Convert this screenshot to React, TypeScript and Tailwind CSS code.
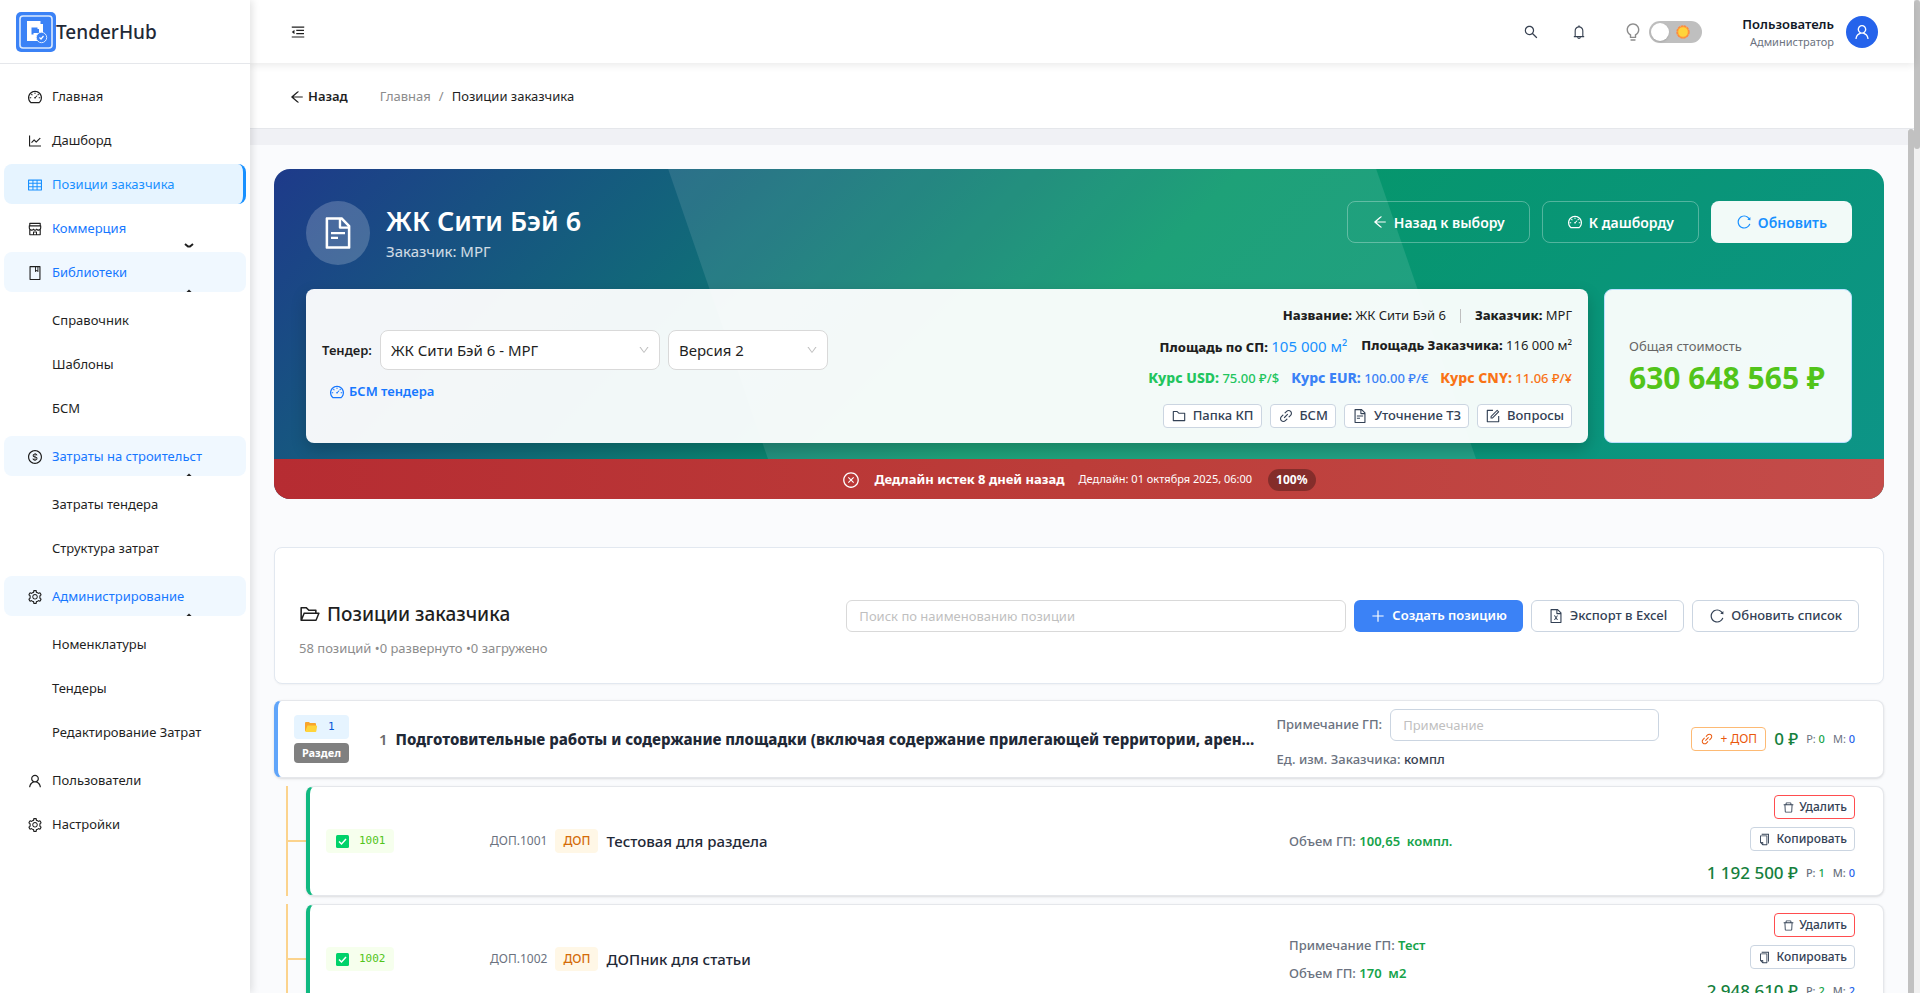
import React from "react";
import {
  AiOutlineArrowLeft, AiOutlineBell, AiOutlineBook, AiOutlineBulb, AiOutlineCloseCircle, AiOutlineCopy,
  AiOutlineDashboard, AiOutlineDelete, AiOutlineDollar, AiOutlineDown, AiOutlineFileExcel, AiOutlineFileText,
  AiOutlineFolder, AiOutlineFolderOpen, AiOutlineForm, AiOutlineLineChart, AiOutlineLink, AiOutlineMenuFold,
  AiOutlinePlus, AiOutlineReload, AiOutlineSearch, AiOutlineSetting, AiOutlineShop, AiOutlineTable, AiOutlineUser,
} from "react-icons/ai";
import type { IconType } from "react-icons";

type MenuEntry = {
  label: string;
  icon: IconType;
  state?: "active" | "open" | "closed";
  children?: string[];
};

const MENU: MenuEntry[] = [
  { label: "Главная", icon: AiOutlineDashboard },
  { label: "Дашборд", icon: AiOutlineLineChart },
  { label: "Позиции заказчика", icon: AiOutlineTable, state: "active" },
  { label: "Коммерция", icon: AiOutlineShop, state: "closed" },
  { label: "Библиотеки", icon: AiOutlineBook, state: "open", children: ["Справочник", "Шаблоны", "БСМ"] },
  { label: "Затраты на строительст", icon: AiOutlineDollar, state: "open", children: ["Затраты тендера", "Структура затрат"] },
  { label: "Администрирование", icon: AiOutlineSetting, state: "open", children: ["Номенклатуры", "Тендеры", "Редактирование Затрат"] },
  { label: "Пользователи", icon: AiOutlineUser },
  { label: "Настройки", icon: AiOutlineSetting },
];

function Logo() {
  return (
    <svg viewBox="0 0 40 40" className="size-10" aria-hidden="true">
      <rect width="40" height="40" rx="5" fill="#3b82f6" />
      <rect x="4" y="4" width="32" height="32" rx="3" fill="none" stroke="#dbeafe" strokeWidth="1.6" />
      <path d="M11 9h13.500v3H27v17H11z" fill="#fff" />
      <path d="M15.500 15.500h6v1.500h1.500v4h-5.500v1.500h-2z" fill="#3b82f6" />
      <circle cx="25.500" cy="25.500" r="5.200" fill="#3b82f6" stroke="#dbeafe" />
      <path d="m23.500 25.500 1.500 1.500 2.500-3" fill="none" stroke="#fff" strokeWidth="1.200" />
    </svg>
  );
}

function SunMark() {
  return (
    <svg viewBox="0 0 14 14" className="size-3.5" aria-hidden="true">
      <circle cx="7" cy="7" r="5.900" fill="#ffd43b" stroke="#ff8a3c" strokeWidth="1.600" strokeDasharray="2.600 0.490" />
      <circle cx="7" cy="7" r="5.200" fill="#ffd43b" stroke="#ff8a3c" strokeWidth="0.600" />
    </svg>
  );
}

function SidebarItem({ entry }: { entry: MenuEntry }) {
  const Icon = entry.icon;
  const base = "relative flex h-10 items-center gap-[9px] overflow-hidden rounded-lg pt-px pl-[23px] text-[13px] whitespace-nowrap";
  const look =
    entry.state === "active"
      ? "border-r-[3px] border-[#1890ff] bg-[#e6f4ff] text-[#1890ff]"
      : entry.state === "open"
        ? "bg-[#f0f8ff] text-[#1677ff]"
        : entry.state === "closed"
          ? "text-[#1677ff]"
          : "text-[#1f1f1f]";
  return (
    <li>
      <a href="#" className={`${base} ${look}`}>
        <Icon className={entry.state === "active" ? "size-4" : "size-4 text-[#1f1f1f]"} />
        {entry.label}
        {entry.state === "closed" && (
          <svg viewBox="0 0 10 5" className="absolute right-13 bottom-0 h-[5px] w-2.5" aria-hidden="true">
            <path d="M1 1l3 2.500h2L9 1" fill="none" stroke="#1f1f1f" strokeWidth="2" />
          </svg>
        )}
        {entry.state === "open" && (
          <svg viewBox="0 0 10 5" className="absolute right-13 bottom-0 h-[5px] w-2.5" aria-hidden="true">
            <path d="M2.500 5l2.500-2.500L7.500 5z" fill="#1f1f1f" />
          </svg>
        )}
      </a>
      {entry.children && (
        <ul className="mt-2 flex flex-col gap-1 pb-1">
          {entry.children.map((c) => (
            <li key={c}>
              <a href="#" className="flex h-10 items-center rounded-lg pt-px pl-12 text-[13px] text-[#1f1f1f]">{c}</a>
            </li>
          ))}
        </ul>
      )}
    </li>
  );
}

function Sidebar() {
  return (
    <aside className="z-10 flex w-[250px] shrink-0 flex-col bg-white shadow-[2px_0_8px_rgba(0,0,0,0.12)]">
      <div className="flex h-16 items-center border-b border-[#e5e7eb] px-4">
        <Logo />
        <span className="pt-0.5 text-[19px] font-medium text-[#1f2937]">TenderHub</span>
      </div>
      <nav className="px-1 pt-3">
        <ul className="flex flex-col gap-1">
          {MENU.map((m) => <SidebarItem key={m.label} entry={m} />)}
        </ul>
      </nav>
    </aside>
  );
}

function Header() {
  return (
    <header className="z-[5] flex h-[63px] shrink-0 items-center justify-between bg-white pt-px pr-9 pl-10 shadow-[0_2px_8px_rgba(0,0,0,0.09)]">
      <button aria-label="Свернуть меню" className="text-[#1f1f1f]"><AiOutlineMenuFold className="size-4" /></button>
      <div className="flex items-center">
        <button aria-label="Поиск" className="grid size-8 place-items-center text-[#374151]"><AiOutlineSearch className="size-4" /></button>
        <button aria-label="Уведомления" className="ml-4 grid size-8 place-items-center text-[#374151]"><AiOutlineBell className="size-4" /></button>
        <AiOutlineBulb className="ml-7 size-5 text-[#8c8c8c]" />
        <button role="switch" aria-checked="false" aria-label="Тёмная тема" className="ml-1.5 flex h-[22px] w-[53px] items-center justify-between rounded-full bg-[#bfbfbf] pr-3 pl-0.5">
          <span className="size-[18px] rounded-full bg-white shadow" />
          <SunMark />
        </button>
        <div className="ml-10 flex flex-col items-end">
          <span className="text-[13px] leading-5 font-semibold text-[#111827]">Пользователь</span>
          <span className="text-[11px] leading-4 text-[#6b7280]">Администратор</span>
        </div>
        <span className="ml-3 grid size-8 place-items-center rounded-full bg-[#2563eb] text-white"><AiOutlineUser className="size-[18px]" /></span>
      </div>
    </header>
  );
}

function Breadcrumbs() {
  return (
    <div className="flex h-[66px] shrink-0 items-center border-b border-[#e5e7eb] bg-white pt-0.5 pl-[39px]">
      <button className="flex items-center gap-[3px] text-[13px] font-semibold text-[#1f1f1f]"><AiOutlineArrowLeft className="size-4" />Назад</button>
      <nav aria-label="Навигация" className="ml-8 flex gap-2 text-[13px] text-[#8c8c8c]">
        <a href="#">Главная</a>
        <span>/</span>
        <span className="text-[#1f1f1f]">Позиции заказчика</span>
      </nav>
    </div>
  );
}

function PickList({ id, value, width }: { id: string; value: string; width: string }) {
  return (
    <div className={`relative ${width}`}>
      <select id={id} aria-label={value} className="h-10 w-full appearance-none rounded-lg border border-[#d9d9d9] bg-white px-2.5 text-[15px] text-[#1f1f1f]">
        <option>{value}</option>
      </select>
      <AiOutlineDown className="pointer-events-none absolute top-3.5 right-2.5 size-3 text-[#bfbfbf]" />
    </div>
  );
}

const LINKS: { icon: IconType; label: string }[] = [
  { icon: AiOutlineFolder, label: "Папка КП" },
  { icon: AiOutlineLink, label: "БСМ" },
  { icon: AiOutlineFileText, label: "Уточнение ТЗ" },
  { icon: AiOutlineForm, label: "Вопросы" },
];

function Hero() {
  return (
    <section className="relative overflow-hidden rounded-2xl bg-[linear-gradient(135deg,#1e3a8a_0%,#059669_50%,#0d9488_100%)]">
      <div className="absolute inset-y-0 left-[28%] w-[44%] skew-x-[19deg] bg-white/10" />
      <div className="relative flex flex-col gap-6 px-8 pt-8 pb-4">
        <div className="flex items-start justify-between">
          <div className="flex items-center gap-4">
            <span className="grid size-16 place-items-center rounded-full bg-white/20 text-white"><AiOutlineFileText className="size-9" /></span>
            <div className="text-white">
              <h1 className="text-[27px] leading-9 font-semibold">ЖК Сити Бэй 6</h1>
              <p className="text-[15px] leading-6 text-white/80">Заказчик: МРГ</p>
            </div>
          </div>
          <div className="flex gap-3 text-[14px] font-semibold text-white">
            <button className="flex h-[42px] items-center gap-1.5 rounded-lg border border-white/30 px-6"><AiOutlineArrowLeft className="size-4" />Назад к выбору</button>
            <button className="flex h-[42px] items-center gap-1.5 rounded-lg border border-white/30 px-6"><AiOutlineDashboard className="size-4" />К дашборду</button>
            <button className="flex h-[42px] items-center gap-1.5 rounded-lg border border-transparent bg-white/95 px-6 text-[#1890ff]"><AiOutlineReload className="size-4" />Обновить</button>
          </div>
        </div>
        <div className="flex gap-4">
          <div className="flex h-[154px] flex-1 items-center justify-between rounded-lg bg-white/95 px-4 shadow-[0_6px_16px_rgba(0,0,0,0.2)]">
            <div className="flex flex-col gap-3">
              <div className="flex items-center gap-2">
                <label htmlFor="tender" className="text-[13px] font-semibold text-[#1f1f1f]">Тендер:</label>
                <PickList id="tender" value="ЖК Сити Бэй 6 - МРГ" width="w-[280px]" />
                <PickList id="version" value="Версия 2" width="w-40" />
              </div>
              <button className="flex items-center gap-1 pl-[7px] text-[13px] font-semibold text-[#1677ff]"><AiOutlineDashboard className="size-4" />БСМ тендера</button>
            </div>
            <div className="flex flex-col items-end text-[13px] text-[#1f1f1f]">
              <p className="flex h-6 items-center gap-3.5"><span><b className="font-extrabold">Название:</b> ЖК Сити Бэй 6</span><span className="h-3.5 w-px bg-[#bfbfbf]" /><span><b className="font-extrabold">Заказчик:</b> МРГ</span></p>
              <p className="mt-1.5 flex h-6 items-center gap-3.5"><span><b className="font-extrabold">Площадь по СП:</b> <span className="text-[15px] text-[#1890ff]">105 000 м²</span></span><span><b className="font-extrabold">Площадь Заказчика:</b> 116 000 м²</span></p>
              <p className="mt-2 flex h-6 items-center gap-3 font-medium">
                <span className="text-[#22c55e]"><b className="text-[14px] font-extrabold">Курс USD:</b> 75.00 ₽/$</span>
                <span className="text-[#3b82f6]"><b className="text-[14px] font-extrabold">Курс EUR:</b> 100.00 ₽/€</span>
                <span className="text-[#f97316]"><b className="text-[14px] font-extrabold">Курс CNY:</b> 11.06 ₽/¥</span>
              </p>
              <div className="mt-3.5 flex gap-2">
                {LINKS.map(({ icon: Icon, label }) => (
                  <button key={label} className="flex h-6 items-center gap-1.5 rounded border border-[#cbd5e1] bg-white px-[7px] font-medium text-[#334155]"><Icon className="size-4" />{label}</button>
                ))}
              </div>
            </div>
          </div>
          <div className="flex w-[248px] flex-col justify-center rounded-lg border border-[#bae0ff] bg-white/95 px-6">
            <span className="text-[13px] leading-6 text-[#666]">Общая стоимость</span>
            <span className="text-[30px] leading-10 font-bold whitespace-nowrap text-[#52c41a]">630 648 565 ₽</span>
          </div>
        </div>
      </div>
      <div className="relative flex h-10 items-center justify-center bg-[linear-gradient(90deg,#b62c32,#bc3d39_50%,#c44c4a)] pt-px text-white">
        <AiOutlineCloseCircle className="size-[18px]" />
        <span className="ml-3.5 text-[13px] font-bold">Дедлайн истек 8 дней назад</span>
        <span className="ml-3.5 text-[11px]">Дедлайн: 01 октября 2025, 06:00</span>
        <span className="ml-4 rounded-full bg-black/30 px-2 text-[12px] leading-[22px] font-bold">100%</span>
      </div>
    </section>
  );
}

function ListToolbar() {
  return (
    <section className="flex h-[137px] items-center justify-between rounded-lg border border-[#e2e8f0] bg-white px-6 shadow-[0_1px_2px_rgba(0,0,0,0.04)]">
      <div className="pt-[26px]">
        <h2 className="flex items-center gap-1.5 text-[19px] leading-8 font-medium text-[#1f1f1f]"><AiOutlineFolderOpen className="size-[22px]" />Позиции заказчика</h2>
        <p className="mt-1.5 text-[13px] leading-6 text-[#8c8c8c]">58 позиций •0 развернуто •0 загружено</p>
      </div>
      <div className="flex gap-2 text-[13px] font-medium text-[#334155]">
        <input aria-label="Поиск по наименованию позиции" placeholder="Поиск по наименованию позиции" className="h-8 w-[500px] rounded-md border border-[#d9d9d9] bg-white px-3 font-normal placeholder:text-[#bfbfbf]" />
        <button className="flex h-8 items-center gap-1.5 rounded-md bg-[#3b82f6] px-4 font-semibold text-white"><AiOutlinePlus className="size-4" />Создать позицию</button>
        <button className="flex h-8 items-center gap-1.5 rounded-md border border-[#cbd5e1] bg-white px-4"><AiOutlineFileExcel className="size-4" />Экспорт в Excel</button>
        <button className="flex h-8 items-center gap-1.5 rounded-md border border-[#cbd5e1] bg-white px-4"><AiOutlineReload className="size-4" />Обновить список</button>
      </div>
    </section>
  );
}

function FolderMark() {
  return (
    <svg viewBox="0 0 14 12" className="h-3 w-3.5" aria-hidden="true">
      <path d="M1 2q0-1 1-1h3l1 1h5q1 0 1 1v7H1z" fill="#f9a52c" />
      <path d="M3.500 4.500h8.800q.9 0 .8.800l-.8 5q-.1.700-.9.700H2q-.8 0-.7-.700z" fill="#ffd43b" />
    </svg>
  );
}

function CheckMark() {
  return (
    <svg viewBox="0 0 13 13" className="size-[13px]" aria-hidden="true">
      <rect width="13" height="13" rx="1.500" fill="#00d26a" />
      <path d="m3 6.500 2.500 2.500L10 4" fill="none" stroke="#fff" strokeWidth="1.500" />
    </svg>
  );
}

function Totals({ sum, works, materials }: { sum: string; works: number; materials: number }) {
  return (
    <div className="flex items-center gap-2 text-[11px] whitespace-nowrap text-[#6b7280]">
      <span className="text-[17px] leading-6 font-medium text-[#15803d]">{sum}</span>
      <span>Р: <span className="font-medium text-[#16a34a]">{works}</span></span>
      <span>М: <span className="font-medium text-[#2563eb]">{materials}</span></span>
    </div>
  );
}

function SectionRow() {
  return (
    <article className="flex h-[78px] items-center rounded-lg border border-l-4 border-[#e5e7eb] border-l-[#60a5fa] bg-white pr-7 pl-4 shadow-sm">
      <div className="flex w-[55px] shrink-0 flex-col gap-1">
        <span className="flex h-6 items-center gap-2.5 rounded bg-[#e6f4ff] pl-2.5 font-['DejaVu_Sans_Mono',monospace] text-[11px] text-[#0958d9]"><FolderMark />1</span>
        <span className="h-5 rounded bg-[#808080] text-center text-[11px] leading-5 font-bold text-white">Раздел</span>
      </div>
      <h3 className="ml-[30px] min-w-0 flex-1 truncate text-[15px] font-extrabold text-[#1f2937]"><span className="mr-2 font-semibold text-[#6b6b6b]">1</span>Подготовительные работы и содержание площадки (включая содержание прилегающей территории, арен...</h3>
      <div className="ml-3 flex w-[383px] shrink-0 flex-col gap-2 text-[13px] font-medium text-[#6b7280]">
        <label className="flex items-center gap-2 whitespace-nowrap">Примечание ГП:<input placeholder="Примечание" className="h-8 min-w-0 flex-1 rounded-md border border-[#cbd5e1] bg-white px-3 font-normal placeholder:text-[#bfbfbf]" /></label>
        <p className="leading-5">Ед. изм. Заказчика: <span className="text-[#374151]">компл</span></p>
      </div>
      <div className="ml-8 flex shrink-0 items-center gap-2">
        <button className="flex h-6 items-center gap-1.5 rounded border border-[#fdba74] bg-white px-2 text-[12px] text-[#ea580c]"><AiOutlineLink className="size-3.5" />+ ДОП</button>
        <Totals sum="0 ₽" works={0} materials={0} />
      </div>
    </article>
  );
}

type Extra = { code: string; title: string; fields: [string, string][]; sum: string; works: number; materials: number };

const EXTRAS: Extra[] = [
  { code: "1001", title: "Тестовая для раздела", fields: [["Объем ГП:", "100,65  компл."]], sum: "1 192 500 ₽", works: 1, materials: 0 },
  { code: "1002", title: "ДОПник для статьи", fields: [["Примечание ГП:", "Тест"], ["Объем ГП:", "170  м2"]], sum: "2 948 610 ₽", works: 2, materials: 2 },
];

function ExtraRow({ item }: { item: Extra }) {
  return (
    <div className="flex shrink-0">
      <div className="ml-3 flex w-5 shrink-0 items-center border-l-2 border-[#fbd38d]"><span className="h-0.5 w-full bg-[#fbd38d]" /></div>
      <article className="flex h-[110px] min-w-0 flex-1 items-center rounded-lg border border-l-4 border-[#e5e7eb] border-l-[#10b981] bg-white pr-7 pl-4 shadow-sm">
        <div className="flex w-[164px] shrink-0">
          <span className="flex h-6 items-center gap-2.5 rounded bg-[#f6ffed] pr-2 pl-2.5 font-['DejaVu_Sans_Mono',monospace] text-[11px] text-[#52c41a]"><CheckMark />{item.code}</span>
        </div>
        <div className="flex min-w-0 flex-1 items-center gap-2">
          <span className="text-[12px] text-[#6b7280]">ДОП.{item.code}</span>
          <span className="rounded bg-[#fff7e6] px-2 text-[12px] leading-6 font-medium text-[#d46b08]">ДОП</span>
          <h3 className="truncate text-[15px] font-medium text-[#1f2937]">{item.title}</h3>
        </div>
        <div className="flex w-[386px] shrink-0 flex-col gap-2 text-[13px] font-medium text-[#6b7280]">
          {item.fields.map(([k, v]) => (
            <p key={k} className="leading-5 whitespace-pre">{k} <span className="font-semibold text-[#16a34a]">{v}</span></p>
          ))}
        </div>
        <div className="flex w-[180px] shrink-0 flex-col items-end gap-2 text-[12px] font-medium text-[#334155]">
          <button className="flex h-6 items-center gap-1 rounded border border-[#ff4d4f] bg-white px-[7px]"><AiOutlineDelete className="size-[13px]" />Удалить</button>
          <button className="flex h-6 items-center gap-1.5 rounded border border-[#cbd5e1] bg-white px-[7px]"><AiOutlineCopy className="size-[13px]" />Копировать</button>
          <div className="pt-0.5 pb-0.5"><Totals sum={item.sum} works={item.works} materials={item.materials} /></div>
        </div>
      </article>
    </div>
  );
}

export default function App() {
  return (
    <div className="flex h-screen overflow-hidden bg-[#fafbfd] font-['Noto_Sans','Open_Sans',sans-serif]">
      <Sidebar />
      <div className="flex min-w-0 flex-1 flex-col">
        <Header />
        <Breadcrumbs />
        <div className="flex min-h-0 flex-1">
          <main className="min-w-0 flex-1 overflow-hidden">
            <div className="h-4 bg-[#f0f1f5]" />
            <div className="flex flex-col px-6 pt-6">
              <Hero />
              <div className="mt-12"><ListToolbar /></div>
              <div className="mt-4 flex flex-col gap-2">
                <SectionRow />
                {EXTRAS.map((e) => <ExtraRow key={e.code} item={e} />)}
              </div>
            </div>
          </main>
          <div className="w-1.5 shrink-0 rounded-t-full bg-[#c1c1c1]" />
        </div>
      </div>
      <div className="w-1.5 shrink-0 bg-[#f1f1f1]"><div className="h-[149px] rounded-full bg-[#c1c1c1]" /></div>
    </div>
  );
}
